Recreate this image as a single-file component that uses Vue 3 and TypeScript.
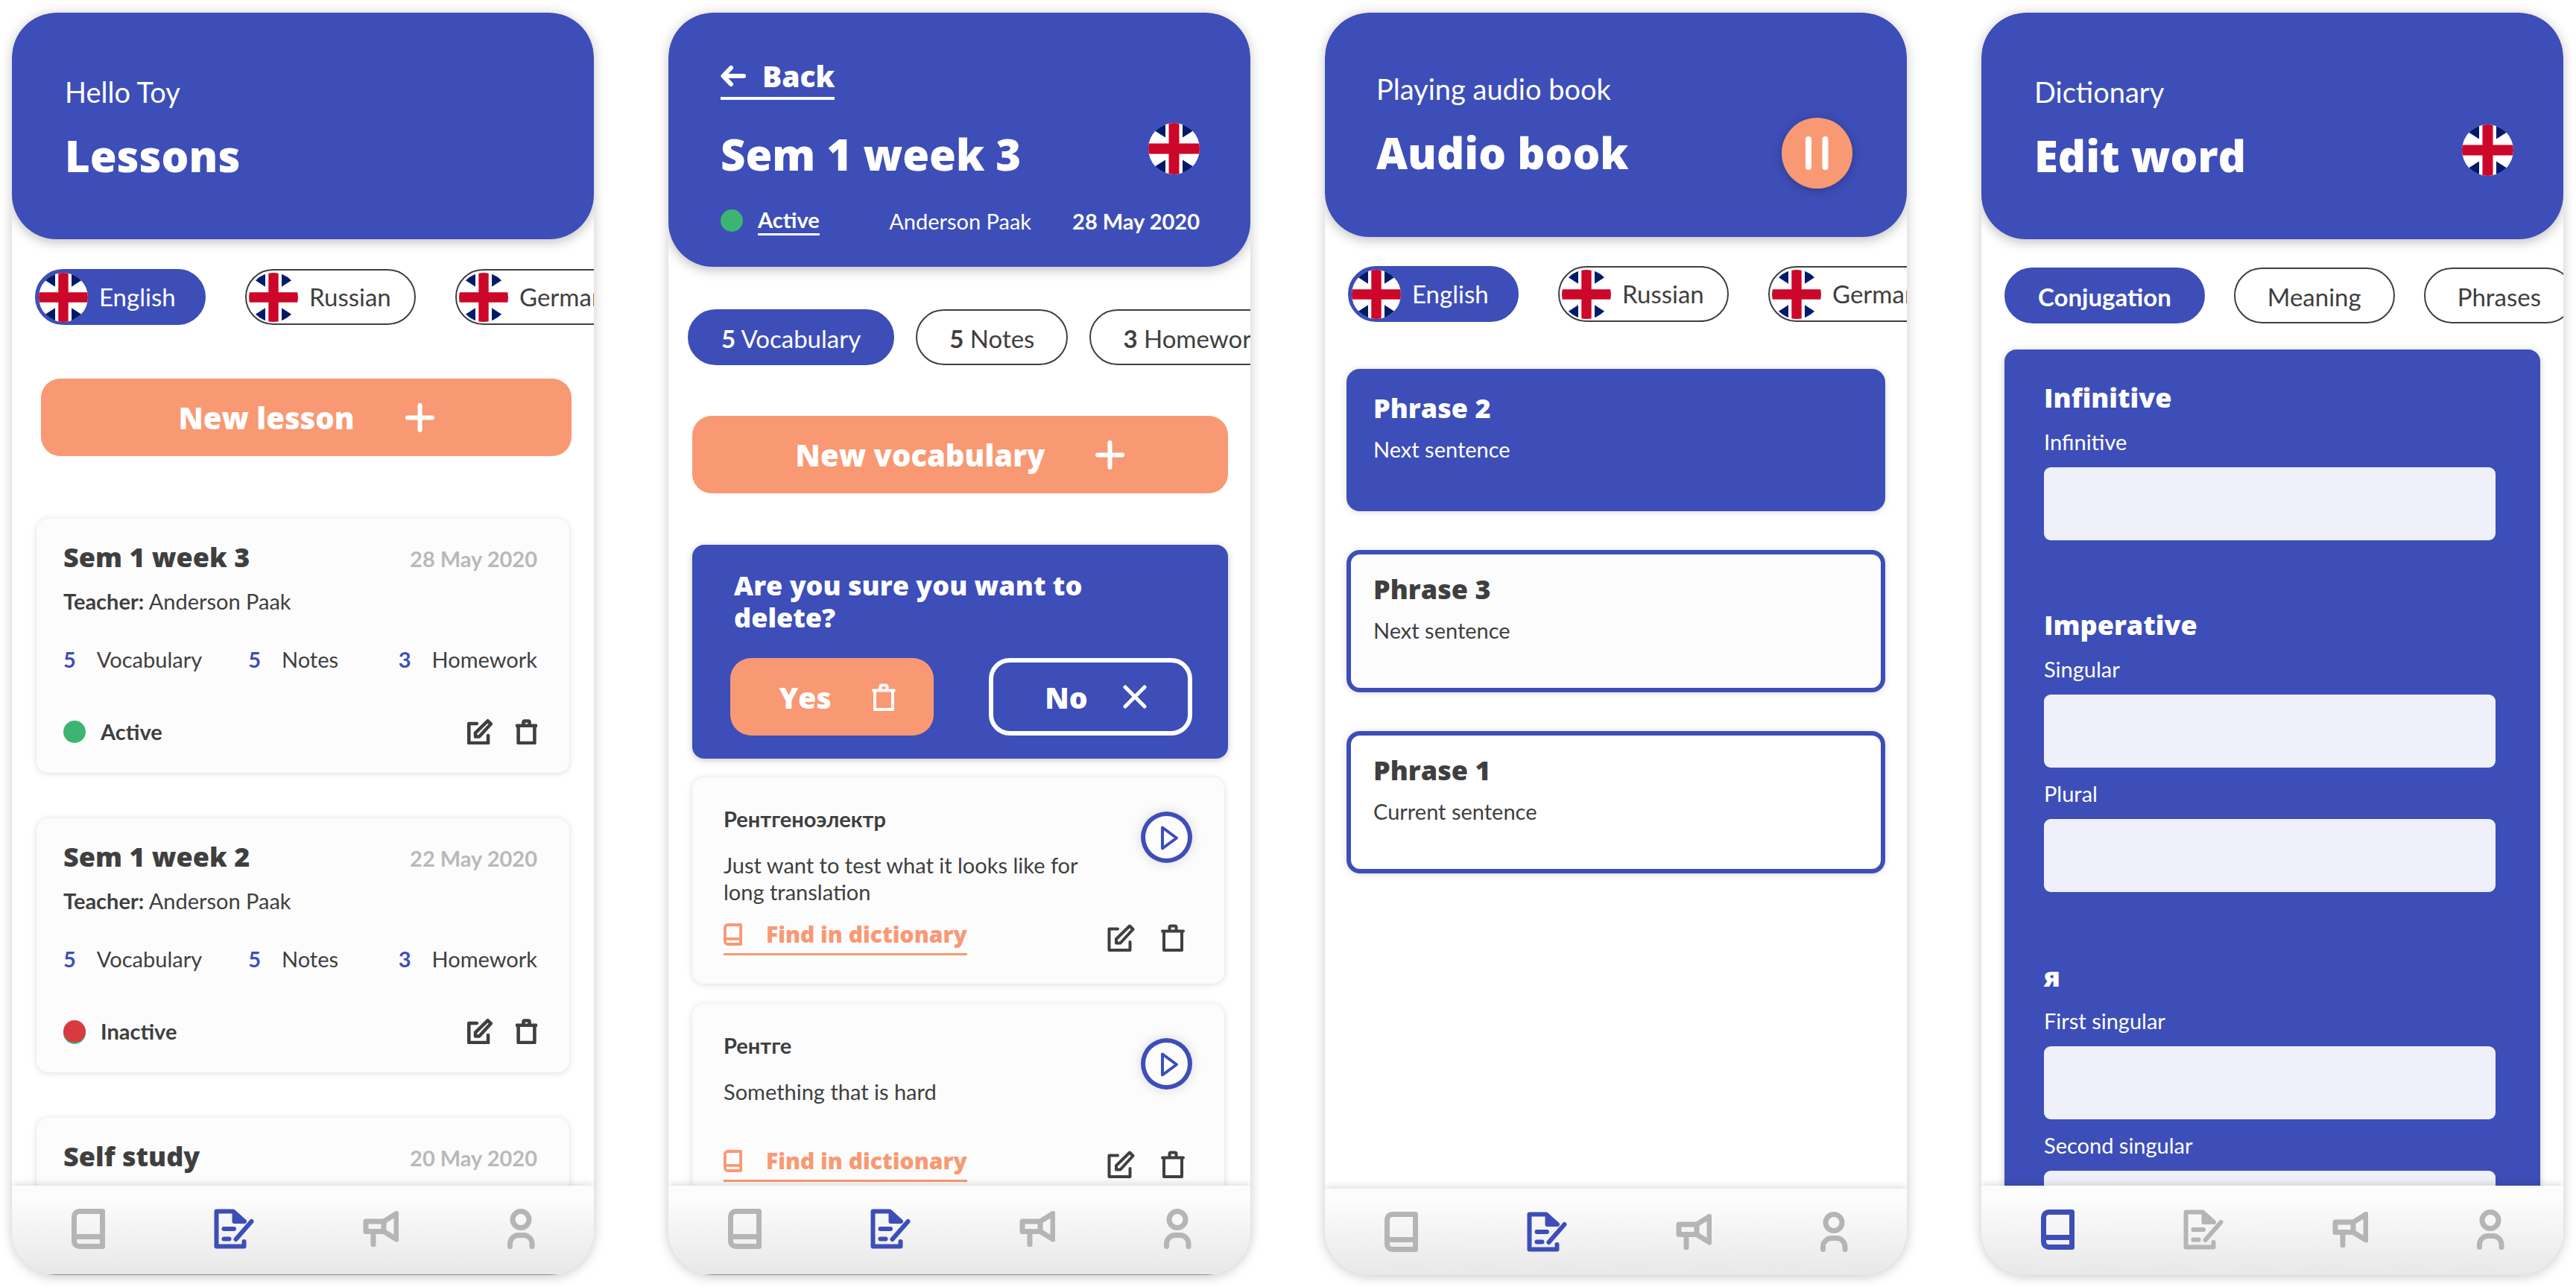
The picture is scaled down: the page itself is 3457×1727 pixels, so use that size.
<script setup lang="ts">
import { h, ref } from 'vue'

interface Glyph {
  w: number
  h: number
  stroke: number
  d: string
}

const glyphs: Record<string, Glyph> = {
  book: { w: 45, h: 54, stroke: 7, d: 'M41.5 3.5H10.5a7 7 0 0 0-7 7v33a7 7 0 0 0 7 7h31zM4 37.5h37' },
  doc: {
    w: 54, h: 54, stroke: 6,
    d: 'M40.5 44v6.5H3.5v-47H26l15 13.5H27.5V5M30 9v5h5M50.5 17 29.5 41M13.5 27H27M13.5 40.5h7',
  },
  horn: { w: 48, h: 48, stroke: 7, d: 'M28 14H4v13.500h24zl17-10.500v34.500l-17-10.500M14 30v15' },
  user: { w: 37, h: 54, stroke: 7, d: 'M29 14.500a11 11 0 1 1-22 0a11 11 0 1 1 22 0M3.500 50.500v-3.500a11.500 11.500 0 0 1 11.500-11.500h6.500a11.500 11.500 0 0 1 11.500 11.500v3.500' },
  edit: { w: 37, h: 37, stroke: 4, d: 'M14 6.500H2.500V35h28V24M12 25.500V20L30 2.500l4.500 4.500L17.500 25.500z' },
  trash: { w: 32, h: 37, stroke: 4, d: 'M2 9.500h28M11.500 9V4.500q0-2 2-2h5q2 0 2 2V9M4 10v25h24V10' },
  plus: { w: 39, h: 39, stroke: 6, d: 'M19.500 3v33M3 19.500h33' },
  back: { w: 34, h: 30, stroke: 6, d: 'M31 15H4M14 4 3.500 15 14 26' },
  cross: { w: 32, h: 32, stroke: 5, d: 'M3 3l26 26M29 3 3 29' },
  pause: { w: 31, h: 45, stroke: 8, d: 'M4 4v37M26.500 4v37' },
  play: { w: 69, h: 69, stroke: 4, d: 'M29 21.500v28L48 35.500z' },
}

const Icon = (props: { name: string; scale?: number; stroke?: number }) => {
  const g = glyphs[props.name]
  const k = props.scale ?? 1
  return h(
    'svg',
    {
      width: Math.round(g.w * k),
      height: Math.round(g.h * k),
      viewBox: `0 0 ${g.w} ${g.h}`,
      fill: 'none',
      stroke: 'currentColor',
      'stroke-width': props.stroke ?? g.stroke,
      'stroke-linecap': 'round',
      'stroke-linejoin': 'round',
      'aria-hidden': 'true',
    },
    [h('path', { d: g.d })],
  )
}
Icon.props = ['name', 'scale', 'stroke']

const Flag = (props: { size: number }) =>
  h(
    'svg',
    { width: props.size, height: props.size, viewBox: '0 0 69 69', role: 'img', 'aria-label': 'British flag' },
    [
      h('rect', { width: 69, height: 69, fill: '#fff' }),
      h('path', { fill: '#001b69', d: 'M23-2v21.500L8 10zM46-2v21.500L61 10zM23 71V49.500L8 59zM46 71V49.500L61 59z' }),
      h('path', { fill: '#cc0729', d: 'M27.500 0h14v69h-14zM0 27.500h69v14H0z' }),
    ],
  )
Flag.props = ['size']

const languages = ['English', 'Russian', 'German']
const tabs = [
  { count: 5, label: 'Vocabulary' },
  { count: 5, label: 'Notes' },
  { count: 3, label: 'Homework' },
]
const lessons = [
  { title: 'Sem 1 week 3', date: '28 May 2020', teacher: 'Anderson Paak', status: 'Active' },
  { title: 'Sem 1 week 2', date: '22 May 2020', teacher: 'Anderson Paak', status: 'Inactive' },
  { title: 'Self study', date: '20 May 2020', teacher: '', status: '' },
]
const words = [
  { word: 'Рентгеноэлектр', meaning: 'Just want to test what it looks like for long translation' },
  { word: 'Рентге', meaning: 'Something that is hard' },
]
const phrases = [
  { title: 'Phrase 2', note: 'Next sentence', look: 'solid' },
  { title: 'Phrase 3', note: 'Next sentence', look: 'tinted' },
  { title: 'Phrase 1', note: 'Current sentence', look: '' },
]
const sections = ref([
  { title: 'Infinitive', fields: [{ label: 'Infinitive', value: '' }] },
  { title: 'Imperative', fields: [{ label: 'Singular', value: '' }, { label: 'Plural', value: '' }] },
  { title: 'я', fields: [{ label: 'First singular', value: '' }, { label: 'Second singular', value: '' }] },
])
const navItems = [
  { icon: 'book', label: 'Dictionary' },
  { icon: 'doc', label: 'Lessons' },
  { icon: 'horn', label: 'News' },
  { icon: 'user', label: 'Profile' },
]
</script>

<template>
  <div class="board">
    <section class="phone">
      <header class="top">
        <p class="hello">Hello Toy</p>
        <div class="title-row"><h1>Lessons</h1></div>
      </header>
      <main class="body lessons">
        <div class="chips wide">
          <button v-for="(l, i) in languages" :key="l" type="button" class="chip lang" :class="{ on: i === 0 }">
            <Flag class="flag" :size="66" />{{ l }}
          </button>
        </div>
        <button type="button" class="cta">New lesson<Icon name="plus" /></button>
        <div class="stack">
          <article v-for="l in lessons" :key="l.title" class="card lesson">
            <div class="line head">
              <h2>{{ l.title }}</h2>
              <time>{{ l.date }}</time>
            </div>
            <template v-if="l.teacher">
              <p class="teacher"><b>Teacher:</b> {{ l.teacher }}</p>
              <ul class="line counts">
                <li v-for="t in tabs" :key="t.label"><b>{{ t.count }}</b>{{ t.label }}</li>
              </ul>
              <div class="line foot">
                <span class="status"><i class="dot" :class="{ off: l.status === 'Inactive' }"></i><b>{{ l.status }}</b></span>
                <span class="tools">
                  <button type="button" aria-label="Edit lesson"><Icon name="edit" :scale="0.91" :stroke="5" /></button>
                  <button type="button" aria-label="Delete lesson"><Icon name="trash" :scale="0.91" :stroke="5" /></button>
                </span>
              </div>
            </template>
          </article>
        </div>
      </main>
      <nav class="tabbar edged">
        <a v-for="(n, i) in navItems" :key="n.icon" href="#" :class="{ on: i === 1 }" :aria-label="n.label"><Icon :name="n.icon" /></a>
      </nav>
    </section>

    <section class="phone">
      <header class="top tall">
        <a href="#" class="back"><Icon name="back" />Back</a>
        <div class="title-row">
          <h1>Sem 1 week 3</h1>
          <Flag class="flag head-flag" :size="69" />
        </div>
        <div class="meta">
          <i class="dot"></i>
          <a href="#" class="state">Active</a>
          <span class="who">Anderson Paak</span>
          <time>28 May 2020</time>
        </div>
      </header>
      <main class="body vocab">
        <div class="chips">
          <button v-for="(t, i) in tabs" :key="t.label" type="button" class="chip" :class="{ on: i === 0 }">
            <b>{{ t.count }}</b>&nbsp;{{ t.label }}
          </button>
        </div>
        <button type="button" class="cta">New vocabulary<Icon name="plus" /></button>
        <div class="confirm" role="alertdialog" aria-labelledby="ask">
          <h2 id="ask">Are you sure you want to delete?</h2>
          <div class="line">
            <button type="button" class="choice yes">Yes<Icon name="trash" /></button>
            <button type="button" class="choice no">No<Icon name="cross" /></button>
          </div>
        </div>
        <div class="stack">
          <article v-for="w in words" :key="w.word" class="card word">
            <div class="line">
              <div class="entry">
                <h3>{{ w.word }}</h3>
                <p>{{ w.meaning }}</p>
              </div>
              <button type="button" class="play" aria-label="Play"><Icon name="play" /></button>
            </div>
            <div class="line foot">
              <a href="#" class="find"><Icon name="book" :scale="0.55" />Find in dictionary</a>
              <span class="tools">
                <button type="button" aria-label="Edit word"><Icon name="edit" /></button>
                <button type="button" aria-label="Delete word"><Icon name="trash" /></button>
              </span>
            </div>
          </article>
        </div>
      </main>
      <nav class="tabbar edged">
        <a v-for="(n, i) in navItems" :key="n.icon" href="#" :class="{ on: i === 1 }" :aria-label="n.label"><Icon :name="n.icon" /></a>
      </nav>
    </section>

    <section class="phone">
      <header class="top compact">
        <p class="hello">Playing audio book</p>
        <div class="title-row">
          <h1>Audio book</h1>
          <button type="button" class="pause" aria-label="Pause"><Icon name="pause" /></button>
        </div>
      </header>
      <main class="body audio">
        <div class="chips wide">
          <button v-for="(l, i) in languages" :key="l" type="button" class="chip lang" :class="{ on: i === 0 }">
            <Flag class="flag" :size="66" />{{ l }}
          </button>
        </div>
        <div class="stack">
          <article v-for="p in phrases" :key="p.title" class="phrase" :class="p.look">
            <h2>{{ p.title }}</h2>
            <p>{{ p.note }}</p>
          </article>
        </div>
      </main>
      <nav class="tabbar compact">
        <a v-for="(n, i) in navItems" :key="n.icon" href="#" :class="{ on: i === 1 }" :aria-label="n.label"><Icon :name="n.icon" /></a>
      </nav>
    </section>

    <section class="phone">
      <header class="top">
        <p class="hello">Dictionary</p>
        <div class="title-row">
          <h1>Edit word</h1>
          <Flag class="flag head-flag" :size="69" />
        </div>
      </header>
      <main class="body edit">
        <div class="chips">
          <button type="button" class="chip on"><b>Conjugation</b></button>
          <button type="button" class="chip">Meaning</button>
          <button type="button" class="chip">Phrases</button>
        </div>
        <form class="panel" @submit.prevent>
          <fieldset v-for="(s, si) in sections" :key="s.title">
            <legend>{{ s.title }}</legend>
            <template v-for="(f, fi) in s.fields" :key="f.label">
              <label :for="`f-${si}-${fi}`">{{ f.label }}</label>
              <input :id="`f-${si}-${fi}`" v-model="f.value" type="text" />
            </template>
          </fieldset>
        </form>
      </main>
      <nav class="tabbar">
        <a v-for="(n, i) in navItems" :key="n.icon" href="#" :class="{ on: i === 0 }" :aria-label="n.label"><Icon :name="n.icon" /></a>
      </nav>
    </section>
  </div>
</template>

<style>
body {
  background: #fff;
}
</style>

<style scoped>
.board {
  --blue: #3d4eb8;
  --orange: #f89974;
  --ink: #3f3f3f;
  --paper: #fcfcfc;
  display: grid;
  grid-template-columns: repeat(4, minmax(0, 1fr));
  gap: 100px;
  box-sizing: border-box;
  height: 100vh;
  padding: 17px 17px 16px 16px;
  font-family: Lato, "Noto Sans", sans-serif;
  font-size: 29px;
  line-height: 37px;
  color: var(--ink);
}
.board *, .board *::before {
  box-sizing: border-box;
}
h1, h2, h3, p, ul {
  margin: 0;
  padding: 0;
  font-size: inherit;
  font-weight: inherit;
}
button {
  margin: 0;
  padding: 0;
  border: 0;
  background: none;
  font: inherit;
  color: inherit;
  cursor: pointer;
}
a {
  color: inherit;
  text-decoration: none;
}
svg {
  display: block;
  flex: none;
}
h1, h2, legend, .back, .cta, .choice, .find {
  font-family: "Open Sans", Lato, sans-serif;
  font-weight: 800;
}
.phone {
  display: flex;
  flex-direction: column;
  min-height: 0;
  border-radius: 60px;
  background: #fff;
  box-shadow: 0 2px 16px rgba(0, 0, 0, 0.22);
  overflow: hidden;
}
.top {
  position: relative;
  z-index: 1;
  flex: none;
  padding: 83px 67px 78px 71px;
  border-radius: 60px;
  background: var(--blue);
  color: #fff;
  box-shadow: 0 4px 16px rgba(0, 0, 0, 0.25);
}
.top.compact {
  padding: 79px 73px 79px 69px;
}
.top.tall {
  padding: 62px 68px 42px 70px;
}
.hello {
  margin-bottom: 29px;
  font-size: 38px;
  line-height: 46px;
}
.title-row {
  display: flex;
  justify-content: space-between;
  align-items: center;
  height: 68px;
}
h1 {
  font-size: 58px;
  line-height: 68px;
}
.flag {
  border-radius: 50%;
}
.head-flag {
  margin-bottom: 16px;
}
.pause {
  display: flex;
  justify-content: center;
  align-items: center;
  width: 95px;
  height: 95px;
  border-radius: 50%;
  background: var(--orange);
  box-shadow: 0 2px 14px rgba(0, 0, 0, 0.25);
}
.back {
  display: inline-flex;
  align-items: center;
  gap: 22px;
  margin-bottom: 39px;
  padding-bottom: 5px;
  border-bottom: 4px solid #fff;
  font-size: 39px;
  line-height: 46px;
  vertical-align: top;
}
.meta {
  display: flex;
  align-items: center;
  margin-top: 35px;
}
.meta .dot {
  margin-right: 20px;
}
.state {
  border-bottom: 3px solid #fff;
  font-weight: 700;
}
.who {
  margin-left: auto;
}
.meta time {
  margin-left: 55px;
  font-weight: 700;
}
.dot {
  width: 30px;
  height: 30px;
  border-radius: 50%;
  background: #3cb573;
}
.dot.off {
  background: #d93a42;
  box-shadow: 0 2px 0 #3cb573;
}
.body {
  flex: 1;
  min-height: 0;
  overflow: auto;
  scrollbar-width: none;
}
.lessons {
  padding: 40px 0;
}
.vocab {
  padding: 57px 0;
}
.audio {
  padding: 39px 0;
}
.edit {
  padding: 38px 0;
}
.chips {
  display: flex;
  gap: 29px;
  padding-left: 31px;
  overflow: hidden;
}
.vocab .chips {
  padding-left: 26px;
}
.edit .chips {
  gap: 39px;
}
.chips.wide {
  gap: 53px;
}
.chip {
  display: flex;
  flex: none;
  align-items: center;
  height: 75px;
  padding: 3px 43px 0;
  border: 2px solid var(--ink);
  border-radius: 38px;
  font-size: 33px;
  white-space: nowrap;
}
.chip.on {
  border-color: var(--blue);
  background: var(--blue);
  color: #fff;
}
.chip.lang {
  width: 229px;
  padding: 0 0 0 3px;
}
.chip.lang .flag {
  margin-right: 15px;
}
.cta {
  display: flex;
  justify-content: center;
  align-items: center;
  gap: 68px;
  width: calc(100% - 62px);
  height: 104px;
  margin: 72px 0 84px 32px;
  border-radius: 26px;
  background: var(--orange);
  color: #fff;
  font-size: 40px;
}
.lessons .cta {
  width: calc(100% - 69px);
  margin-left: 39px;
}
.vocab .cta {
  margin: 68px 0 69px 32px;
}
.stack {
  display: flex;
  flex-direction: column;
  gap: 61px;
  padding: 0 33px;
}
.card {
  border-radius: 16px;
  background: var(--paper);
  box-shadow: 0 1px 8px rgba(0, 0, 0, 0.14);
}
.line {
  display: flex;
  justify-content: space-between;
}
.lesson {
  min-height: 341px;
  padding: 29px 43px 37px 36px;
}
.lesson h2 {
  font-size: 36px;
  line-height: 46px;
}
.head {
  align-items: baseline;
}
.head time {
  color: #b9b9b9;
  font-weight: 700;
}
.teacher {
  margin-top: 17px;
}
.counts {
  justify-content: flex-start;
  gap: 62px;
  margin-top: 41px;
  list-style: none;
}
.counts li:last-child {
  margin-left: auto;
}
.counts b {
  margin-right: 28px;
  color: var(--blue);
}
.lesson .foot {
  align-items: center;
  margin-top: 60px;
}
.status {
  display: flex;
  align-items: center;
  gap: 20px;
}
.tools {
  display: flex;
  gap: 31px;
}
.confirm {
  margin: 0 30px 25px 32px;
  padding: 33px 48px 31px 51px;
  border-radius: 16px;
  background: var(--blue);
  color: #fff;
  box-shadow: 0 2px 10px rgba(0, 0, 0, 0.22);
}
.confirm h2 {
  max-width: 520px;
  margin-bottom: 33px;
  padding-left: 5px;
  font-size: 36px;
  line-height: 43px;
}
.choice {
  display: flex;
  justify-content: center;
  align-items: center;
  gap: 54px;
  width: 273px;
  height: 104px;
  padding-left: 14px;
  border-radius: 28px;
  font-size: 39px;
}
.yes {
  background: var(--orange);
}
.no {
  gap: 47px;
  border: 6px solid #fff;
}
.vocab .stack {
  gap: 27px;
  padding: 0 35px 0 32px;
}
.word {
  padding: 37px 43px 38px 42px;
}
.word h3 {
  margin-bottom: 26px;
  font-weight: 700;
}
.entry {
  max-width: 520px;
}
.entry p {
  min-height: 72px;
  line-height: 36px;
}
.play {
  width: 69px;
  height: 69px;
  margin-top: 9px;
  border-radius: 50%;
  box-shadow: inset 0 0 0 6px var(--blue), 0 0 16px rgba(0, 0, 0, 0.14);
  color: var(--blue);
}
.word .foot {
  align-items: flex-start;
  margin-top: 20px;
}
.find {
  display: flex;
  align-items: center;
  gap: 32px;
  padding-bottom: 7px;
  border-bottom: 3px solid var(--orange);
  color: var(--orange);
  font-size: 30px;
}
.word .tools {
  gap: 35px;
  padding: 5px 10px 0 0;
}
.audio .stack {
  gap: 52px;
  margin-top: 63px;
  padding: 0 29px;
}
.phrase {
  height: 191px;
  padding: 24px 30px;
  border: 6px solid var(--blue);
  border-radius: 18px;
  box-shadow: 0 1px 10px rgba(0, 0, 0, 0.14);
}
.phrase.tinted {
  background: var(--paper);
}
.phrase.solid {
  background: var(--blue);
  color: #fff;
}
.phrase h2 {
  margin-bottom: 13px;
  font-size: 36px;
  line-height: 46px;
}
.panel {
  margin: 35px 31px 0;
  padding: 41px 60px 60px 53px;
  border-radius: 16px;
  background: var(--blue);
  color: #fff;
  box-shadow: 0 1px 10px rgba(0, 0, 0, 0.2);
}
fieldset {
  display: block;
  margin: 0 0 90px;
  padding: 0;
  border: 0;
}
legend {
  display: block;
  margin-bottom: 16px;
  padding: 0;
  font-size: 36px;
  line-height: 48px;
}
label {
  display: block;
}
.panel input {
  display: block;
  width: 100%;
  height: 98px;
  margin: 16px 0;
  padding: 0 24px;
  border: 0;
  border-radius: 9px;
  background: #f0f0fa;
  color: var(--ink);
  font: inherit;
}
.panel input:last-child {
  margin-bottom: 0;
}
.tabbar {
  position: relative;
  z-index: 1;
  display: flex;
  flex: none;
  justify-content: space-between;
  align-items: center;
  height: 120px;
  padding: 0 79px 3px 80px;
  background: linear-gradient(#fcfcfc 15%, #e8e8e8);
  box-shadow: 0 -2px 10px rgba(0, 0, 0, 0.14);
  color: #b5b5b5;
}
.tabbar.compact {
  height: 116px;
  padding-bottom: 0;
}
.tabbar.edged {
  border-bottom: 1px solid #8d9094;
}
.tabbar .on {
  color: var(--blue);
}
</style>
